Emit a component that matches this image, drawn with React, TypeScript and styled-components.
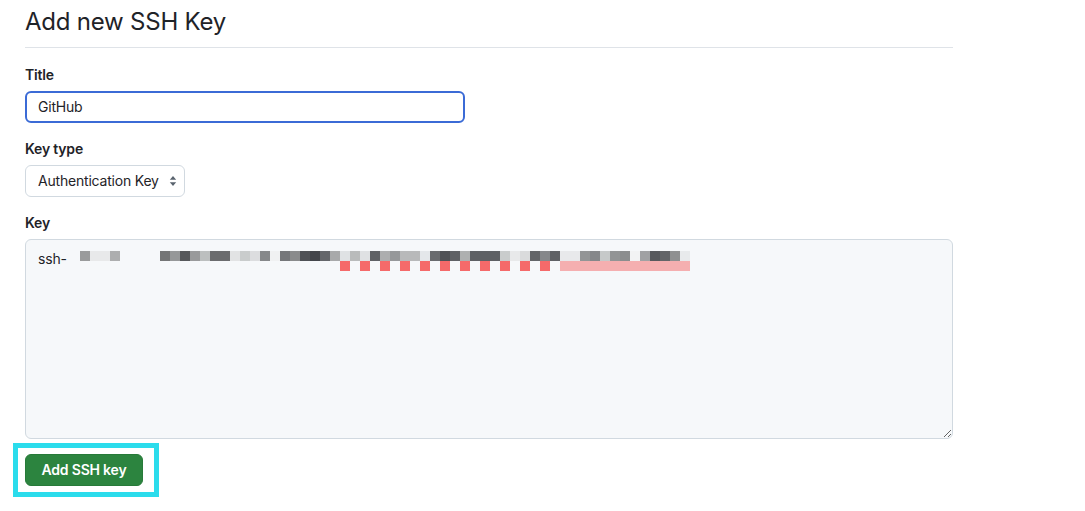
import React from "react";
import styled, { createGlobalStyle } from "styled-components";

const GlobalStyle = createGlobalStyle`
  html, body {
    margin: 0;
    padding: 0;
    background: #ffffff;
    color: #1f2328;
    font-family: Inter, "Liberation Sans", sans-serif;
  }
`;

// blurred-out part of the key, one colour per 10px cell
const maskedStart = ["#9a9b9c", "#e8e9ea", "#e8e9ea", "#adaeaf"];
const maskedKey = [
  "#747576", "#969899", "#56585b", "#999a9b", "#bcbfbf", "#6b6c6e", "#6b6c6e",
  "#e2e3e4", "#c9cccc", "#dcdddf", "#86888a", "#f0f1f2", "#75777a", "#8a8b8c",
  "#4f5155", "#43454a", "#64666a", "#a8a9aa", "#dfe2e4", "#b9bbbb", "#dfe1e3",
  "#5f6165", "#adaeaf", "#96989a", "#b8b9ba", "#b8b9ba", "#e4e7ea", "#696b6e",
  "#4f5155", "#5f6165", "#aeb0b0", "#5e6064", "#5e6064", "#5e6064", "#c9cccc",
  "#e8e9ea", "#dadbdc", "#636568", "#85878a", "#5f6165", "#e8e9eb", "#e8e9eb",
  "#939596", "#85878a", "#c6c9c9", "#929495", "#8b8d8e", "#f2f3f4", "#a0a1a3",
  "#57595d", "#636568", "#8f9091", "#e8eaec",
];

const redFlags = [0, 1, 2, 3, 4, 5, 6, 7, 8, 9, 10];

const Page = styled.main`
  width: 928px;
  padding: 0 0 25px 25px;
`;

const Heading = styled.h2`
  margin: 0;
  height: 48px;
  box-sizing: border-box;
  padding-top: 6px;
  border-bottom: 1px solid #dfe3e8;
  font-size: 24px;
  line-height: 32px;
  font-weight: 400;
  letter-spacing: -0.22px;
`;

const Field = styled.div`
  margin-top: 16px;

  &:first-of-type {
    margin-top: 17px;
  }
`;

const Label = styled.label`
  display: block;
  height: 20px;
  margin-bottom: 6px;
  font-size: 14px;
  line-height: 20px;
  font-weight: 600;
  letter-spacing: -0.2px;
`;

const TextInput = styled.input`
  display: block;
  box-sizing: border-box;
  width: 440px;
  height: 32px;
  padding: 0 11px 2px;
  border: 2px solid #3b6bd6;
  border-radius: 6px;
  outline: none;
  background: #ffffff;
  color: #1f2328;
  font: 14px/20px Inter, "Liberation Sans", sans-serif;
  letter-spacing: -0.2px;
`;

const SelectWrap = styled.div`
  position: relative;
  width: 160px;
`;

const Select = styled.select`
  display: block;
  box-sizing: border-box;
  width: 160px;
  height: 32px;
  padding: 0 12px;
  border: 1px solid #d1d9e0;
  border-radius: 6px;
  background: #ffffff;
  color: #1f2328;
  appearance: none;
  font: 14px/20px Inter, "Liberation Sans", sans-serif;
  letter-spacing: -0.2px;
`;

const Caret = styled.svg`
  position: absolute;
  top: 10px;
  right: 8px;
  width: 8px;
  height: 12px;
  pointer-events: none;
`;

const KeyBox = styled.div`
  position: relative;
  width: 928px;
`;

const KeyArea = styled.textarea`
  display: block;
  box-sizing: border-box;
  width: 928px;
  height: 200px;
  padding: 9px 12px 8px;
  border: 1px solid #d1d9e0;
  border-radius: 6px;
  outline: none;
  background: #f6f8fa;
  color: #1f2328;
  resize: vertical;
  font: 14px/20px Inter, "Liberation Sans", sans-serif;
  letter-spacing: -0.2px;
`;

const Mask = styled.div`
  position: absolute;
  left: 55px;
  top: 12px;
  display: flex;
  flex-direction: column;
  pointer-events: none;
`;

const MaskRow = styled.div`
  display: flex;
  height: 10px;
`;

const Cell = styled.span<{ $color: string; $width?: number }>`
  flex: none;
  width: ${(p) => p.$width ?? 10}px;
  height: 10px;
  background: ${(p) => p.$color};
`;

const Squiggle = styled.div`
  display: flex;
  height: 10px;
  margin-left: 260px;
`;

const Actions = styled.div`
  margin-top: 15px;
  display: flex;
`;

const Annotated = styled.div`
  position: relative;

  &::after {
    content: "";
    position: absolute;
    top: -11px;
    bottom: -11px;
    left: -12px;
    right: -16px;
    border: 5px solid #2bdcec;
    pointer-events: none;
  }
`;

const SubmitButton = styled.button`
  display: block;
  box-sizing: border-box;
  width: 118px;
  height: 32px;
  padding: 0;
  border: 1px solid #277a39;
  border-radius: 6px;
  background: #2c843f;
  color: #ffffff;
  font: 600 14px/20px Inter, "Liberation Sans", sans-serif;
  letter-spacing: -0.2px;
`;

export default function App() {
  return (
    <>
      <GlobalStyle />
      <Page>
        <Heading>Add new SSH Key</Heading>
        <Field>
          <Label>Title</Label>
          <TextInput defaultValue="GitHub" />
        </Field>
        <Field>
          <Label>Key type</Label>
          <SelectWrap>
            <Select defaultValue="auth">
              <option value="auth">Authentication Key</option>
              <option value="sign">Signing Key</option>
            </Select>
            <Caret viewBox="0 0 8 12">
              <path d="M4 1 L7.2 4.8 H0.8 Z M4 11 L7.2 7.2 H0.8 Z" fill="#59636e" />
            </Caret>
          </SelectWrap>
        </Field>
        <Field>
          <Label>Key</Label>
          <KeyBox>
            <KeyArea defaultValue="ssh-" spellCheck={false} />
            <Mask>
              <MaskRow>
                {maskedStart.map((c, i) => (
                  <Cell key={i} $color={c} />
                ))}
                <Cell $color="transparent" $width={40} />
                {maskedKey.map((c, i) => (
                  <Cell key={i} $color={c} />
                ))}
              </MaskRow>
              <Squiggle>
                {redFlags.map((i) => (
                  <React.Fragment key={i}>
                    <Cell $color="#f56a6a" />
                    <Cell $color="transparent" />
                  </React.Fragment>
                ))}
                <Cell $color="#f5afb0" $width={130} />
              </Squiggle>
            </Mask>
          </KeyBox>
        </Field>
        <Actions>
          <Annotated>
            <SubmitButton>Add SSH key</SubmitButton>
          </Annotated>
        </Actions>
      </Page>
    </>
  );
}
